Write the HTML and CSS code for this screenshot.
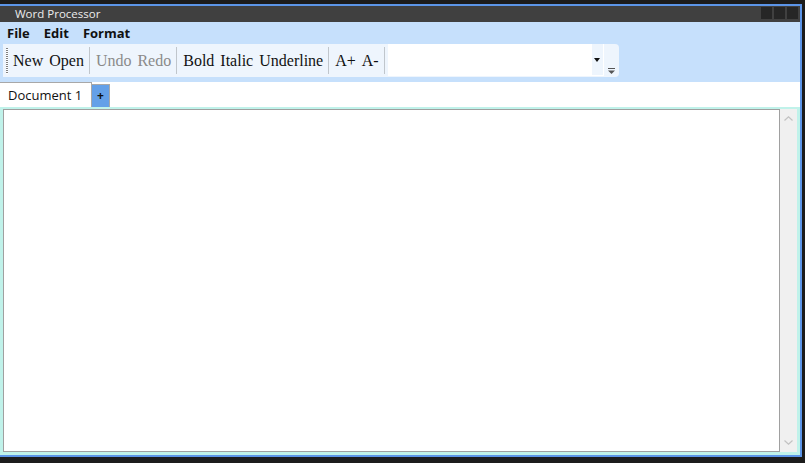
FILE: index.html
```html
<!DOCTYPE html>
<html>
<head>
<meta charset="utf-8">
<link rel="stylesheet" href="styles.css">
</head>
<body>
<div class="win">
  <div class="titlebar">
    <span class="title">Word Processor</span>
    <div class="ctrls"><i></i><i></i><i></i></div>
  </div>
  <div class="menubar">
    <span class="menu">File</span><span class="menu">Edit</span><span class="menu">Format</span>
  </div>
  <div class="tray">
    <div class="toolbar">
      <div class="grip"></div>
      <span class="tb">New</span><span class="tb">Open</span>
      <span class="sep"></span>
      <span class="tb dis">Undo</span><span class="tb dis">Redo</span>
      <span class="sep"></span>
      <span class="tb">Bold</span><span class="tb">Italic</span><span class="tb">Underline</span>
      <span class="sep"></span>
      <span class="tb">A+</span><span class="tb">A-</span>
      <span class="sep"></span>
      <div class="combo">
        <div class="combo-field"></div>
        <div class="combo-btn"><svg width="6" height="4" viewBox="0 0 6 4"><path d="M0 0H6L3 4Z" fill="#111"/></svg></div>
      </div>
      <div class="overflow"><svg width="7" height="6" viewBox="0 0 7 6"><rect x="0" y="0" width="7" height="1" fill="#555"/><path d="M0 2.5H7L3.5 6Z" fill="#555"/></svg></div>
    </div>
  </div>
  <div class="tabs">
    <div class="tab">Document 1</div>
    <div class="addtab">+</div>
  </div>
  <div class="content">
    <div class="editor"></div>
    <div class="vscroll">
      <svg class="chev" width="9" height="5" viewBox="0 0 9 5"><path d="M0.5 4.5L4.5 0.8L8.5 4.5" fill="none" stroke="#c2c2c2" stroke-width="1.2"/></svg>
      <svg class="chev" width="9" height="5" viewBox="0 0 9 5"><path d="M0.5 0.5L4.5 4.2L8.5 0.5" fill="none" stroke="#c2c2c2" stroke-width="1.2"/></svg>
    </div>
  </div>
</div>
</body>
</html>
```
FILE: styles.css
```css
html, body {
  margin: 0;
  padding: 0;
}
body {
  background: #1c1c1c;
  width: 805px;
  height: 463px;
  overflow: hidden;
  font-family: "Open Sans", "Noto Sans", sans-serif;
}
.win {
  margin-top: 4px;
  width: 800px;
  height: 449px;
  border-top: 2px solid #5c95e8;
  border-right: 2px solid #5c95e8;
  border-bottom: 2px solid #5c95e8;
  display: flex;
  flex-direction: column;
  background: #c6e0fc;
}
.titlebar {
  height: 16px;
  background: #404040;
  display: flex;
  align-items: center;
  justify-content: space-between;
}
.title {
  color: #ececec;
  font-size: 11.5px;
  padding-left: 15px;
  line-height: 16px;
}
.ctrls {
  display: flex;
  gap: 2px;
  padding-right: 2px;
  align-self: flex-start;
  padding-top: 1px;
}
.ctrls i {
  display: block;
  width: 11px;
  height: 12px;
  background: #262626;
}
.menubar {
  height: 20px;
  box-sizing: border-box;
  padding-top: 2px;
  display: flex;
  align-items: center;
}
.menu {
  font-weight: 700;
  font-size: 13px;
  color: #111;
  padding: 0 7px;
  line-height: 18px;
}
.menu + .menu {
  margin-left: 0;
}
.tray {
  padding: 2px 0 5px 3px;
  display: flex;
}
.toolbar {
  height: 33px;
  width: 616px;
  background: #eef5fd;
  border-radius: 0 4px 4px 0;
  display: flex;
  align-items: center;
  box-sizing: border-box;
}
.grip {
  width: 2px;
  height: 26px;
  margin: 0 2px 0 3px;
  background: repeating-linear-gradient(to bottom, #7f7f7f 0 1px, #ffffff 1px 2px);
}
.tb {
  font-family: "Liberation Serif", "Times New Roman", serif;
  font-size: 16px;
  color: #111;
  padding: 0 3px;
  line-height: 33px;
}
.tb.dis {
  color: #8a8a8a;
}
.sep {
  width: 1px;
  height: 27px;
  background: #c0c6cc;
  margin: 0 3px 0 2px;
}
.combo {
  display: flex;
  height: 32px;
  width: 216px;
  background: #fff;
  align-self: flex-start;
}
.combo-field {
  flex: 1;
}
.combo-btn {
  width: 11px;
  background: #eef5fd;
  display: flex;
  align-items: center;
  justify-content: center;
  margin: 0 1px 1px 0;
}
.overflow {
  flex: 1;
  align-self: stretch;
  display: flex;
  align-items: flex-end;
  justify-content: center;
  padding-bottom: 3px;
}
.tabs {
  height: 25px;
  background: #fff;
  display: flex;
  align-items: flex-end;
}
.tab {
  border-top: 1px solid #a8a8a8;
  border-right: 1px solid #a8a8a8;
  font-size: 13px;
  color: #111;
  line-height: 25px;
  padding-left: 8px;
  box-sizing: border-box;
  width: 92px;
  height: 25px;
}
.addtab {
  width: 19px;
  height: 23px;
  box-sizing: border-box;
  border: 1px solid #a8a8a8;
  border-bottom: none;
  background: #64a0e8;
  color: #111;
  font-size: 12px;
  font-weight: 700;
  text-align: center;
  line-height: 22px;
  margin-left: -1px;
}
.content {
  flex: 1;
  background: #c0f2ea;
  display: flex;
  padding: 2px 3px 3px 3px;
}
.editor {
  flex: 1;
  background: #fff;
  border: 1px solid #a0a0a0;
}
.vscroll {
  width: 17px;
  background: #f0f0f0;
  display: flex;
  flex-direction: column;
  justify-content: space-between;
  align-items: center;
  padding: 7px 0 7px;
  box-sizing: border-box;
}
.chev {
  display: block;
}
```
